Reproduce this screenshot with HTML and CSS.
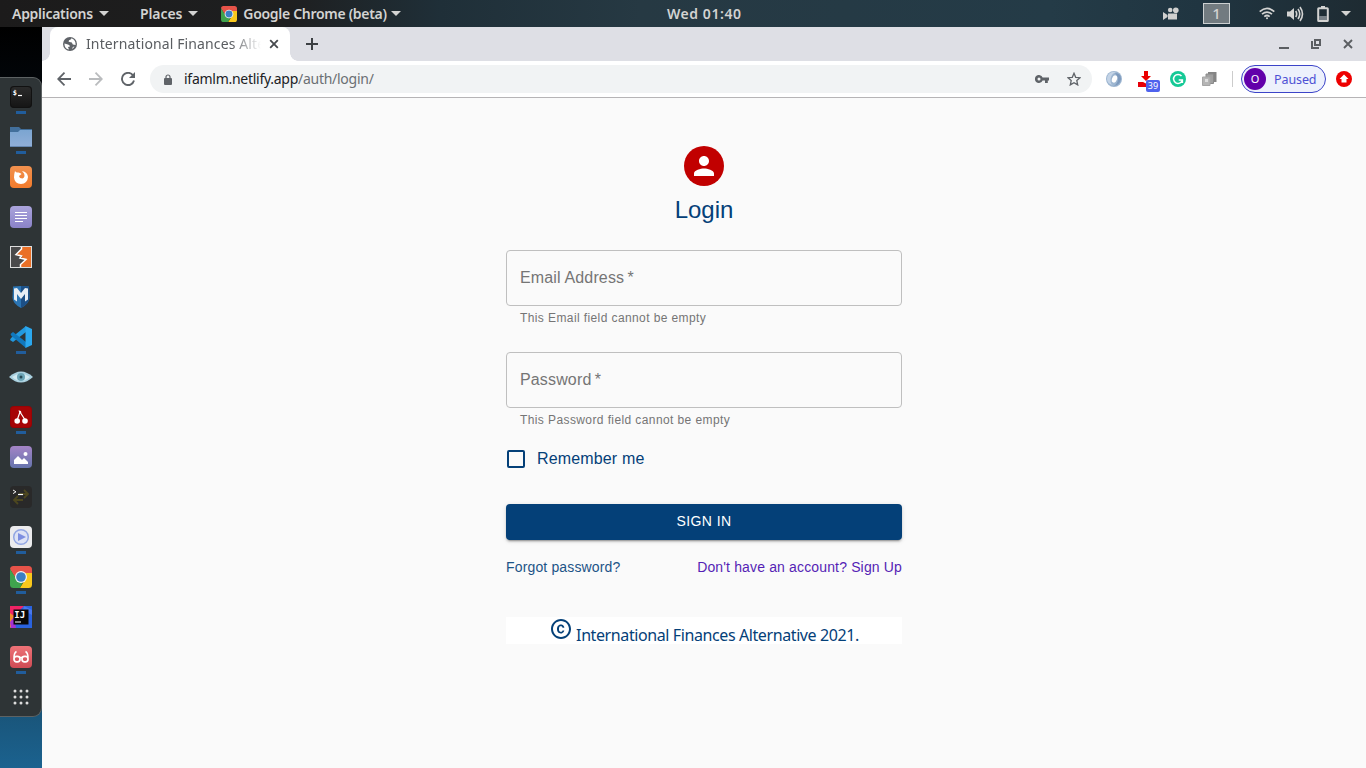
FILE: index.html
```html
<!DOCTYPE html>
<html lang="en">
<head>
<meta charset="utf-8">
<title>International Finances Alternative</title>
<link rel="stylesheet" href="styles.css">
</head>
<body>
<header class="panel">
  <div class="menu menu-apps"><span class="t-apps">Applications</span><i class="caret"></i></div>
  <div class="menu menu-places"><span class="t-places">Places</span><i class="caret"></i></div>
  <div class="menu menu-chrome">
    <svg width="16" height="16" viewBox="0 0 22 22"><use href="#chrome"/></svg>
    <span class="t-chrome">Google Chrome (beta)</span><i class="caret"></i>
  </div>
  <div class="clock"><span>Wed 01:40</span></div>
  <div class="tray">
    <svg class="tray-cam" width="16" height="14" viewBox="0 0 16 14" fill="#d0d0cf"><circle cx="7.200" cy="3" r="2.300"/><circle cx="12.800" cy="3.200" r="2.800"/><path d="M5 6.500h9v6H5zM0 5l4.500 3v2L0 13z"/></svg>
    <span class="workspace">1</span>
    <svg class="tray-wifi" width="16" height="13" viewBox="0 0 16 13" fill="none" stroke="#d3d3d2" stroke-width="1.700"><path d="M.7 4.700q7.300-6.500 14.600 0M3 7.200q5-4.200 10 0M5.300 9.600q2.700-2.200 5.400 0"/><circle cx="8" cy="11.200" r="1" fill="#d3d3d2" stroke="none"/></svg>
    <svg class="tray-vol" width="17" height="16" viewBox="0 0 17 16"><path d="M0 5.500h3l4-3.500v12l-4-3.500H0z" fill="#d3d3d2"/><path d="M8.700 5q2 3 0 6M11 3q3.500 5 0 10M13 1q5 7 0 14" fill="none" stroke="#d3d3d2" stroke-width="1.600"/></svg>
    <svg class="tray-bat" width="12" height="16" viewBox="0 0 12 16"><path d="M4 0h4v2H4z" fill="#d3d3d2"/><rect x="1.200" y="2.200" width="9.600" height="12.800" rx=".6" fill="none" stroke="#d3d3d2" stroke-width="2"/><path d="M2 10h8v4H2z" fill="#778087"/></svg>
    <i class="caret"></i>
  </div>
</header>

<div class="desktop">
  <aside class="side">
    <nav class="dock">
      <div class="app on"><svg viewBox="0 0 22 22"><rect width="22" height="22" rx="4" fill="#191919"/><rect x=".5" y=".5" width="21" height="21" rx="3.500" fill="url(#gDark)" stroke="#111"/><text x="2.800" y="9" class="mono">$</text><path d="M8 9.500h4" stroke="#fff" stroke-width="1.200"/></svg></div>
      <div class="app on"><svg viewBox="0 0 22 22"><path d="M0 1h9l2 2h11v7H0z" fill="#426f9b"/><path d="M0 6h8l2-2h12v17H0z" fill="url(#gFolder)"/><path d="M0 20h22v1H0z" fill="#6687b0"/></svg></div>
      <div class="app"><svg viewBox="0 0 22 22"><rect width="22" height="22" rx="4" fill="url(#gOrange)"/><path d="M5 5q1 2 3.500 1.500Q11 7 11.500 8L9 10q.5 2.500 3.500 2.500Q15.500 11 14 7.500L12 5q5.500 1 6 6-.5 6.500-7 7-6.500-.5-7-6.500Q4 8 5 5z" fill="#fff"/></svg></div>
      <div class="app"><svg viewBox="0 0 22 22"><rect width="22" height="22" rx="4" fill="url(#gPurple)"/><path d="M5 6.500h12M5 9.500h12M5 12.500h12M5 15.500h8" stroke="#fff" stroke-width="1"/></svg></div>
      <div class="app"><svg viewBox="0 0 22 22"><rect width="22" height="22" fill="#4a4a4b"/><path d="M11.500 0H22v22H10.500v-3.500l6-5-5-1.500 1-2-6-1.500L11.500 3z" fill="#ea7027"/><path d="M11.500 0v3L6 8.500l5.500 1.500-1.500 2 6 1.500-5.500 5V22" fill="none" stroke="#fff" stroke-width="1.500"/><rect x=".5" y=".5" width="21" height="21" fill="none" stroke="#ddd"/></svg></div>
      <div class="app"><svg viewBox="0 0 22 22"><path d="M3 .5q8-1 16 0l.5 11q0 6-8.500 10.500Q2.500 17.500 2.500 11.500z" fill="#2b75b4"/><path d="M11 0q4 0 8 .5l.5 11q0 6-8.500 10.500z" fill="#1c4f86"/><path d="M4 2.500l3-.5 4 5 4-5 3 .5v11l-3 2V8l-4 5-4-5v7.500l-3-2z" fill="#e7eef5"/></svg></div>
      <div class="app on"><svg viewBox="0 0 22 22"><path d="M16 0v6L3 16l-3-2 1-2z" fill="#2299df"/><path d="M16 22v-6L3 6 .5 8l1 2z" fill="#1178bd"/><path d="M15.500 0L22 3v16l-6.500 3z" fill="#2ba8ef"/></svg></div>
      <div class="app"><svg class="wide" viewBox="0 0 24 22"><path d="M0 11Q12 0 24 11 12 22 0 11z" fill="#a9d0df"/><path d="M3 11Q12 4 21 11 12 19 3 11z" fill="#d2eaf1"/><circle cx="12" cy="11" r="4" fill="#6ba5b7"/><circle cx="12" cy="11" r="1.500" fill="#294c58"/></svg></div>
      <div class="app on"><svg viewBox="0 0 22 22"><rect width="22" height="22" rx="4" fill="#980305"/><rect x="1" y="1" width="20" height="20" rx="3" fill="#a60406"/><path d="M7.500 13L10 6l4.500 7" fill="none" stroke="#fff" stroke-width="1.200"/><path d="M8.500 4.500q2.500-.5 3 2l-2 .5z" fill="#fff"/><circle cx="7.200" cy="15" r="2.800" fill="#fff"/><circle cx="15" cy="15" r="2.800" fill="#fff"/></svg></div>
      <div class="app"><svg viewBox="0 0 22 22"><rect width="22" height="22" rx="4" fill="url(#gPhoto)"/><circle cx="15.500" cy="8" r="2" fill="#fff"/><path d="M4 18v-4l4-4 4 4 2-2 4 4v2z" fill="#fff"/></svg></div>
      <div class="app"><svg viewBox="0 0 22 22"><rect width="22" height="22" rx="4" fill="#292929"/><path d="M9 8h8M14 4l4 4-4 4M13 14H5M8 10l-4 4 4 4" fill="none" stroke="#4d471f" stroke-width="1.800"/><path d="M3 4l3 1.800L3 7.600" fill="none" stroke="#eee"/><path d="M8 8.500h5" stroke="#fff" stroke-width="1.200"/></svg></div>
      <div class="app on"><svg viewBox="0 0 22 22"><rect width="22" height="22" rx="4" fill="#ebebed"/><circle cx="11" cy="11" r="7.300" fill="#dde2f5" stroke="#92a6e3" stroke-width="1.500"/><path d="M8 7l8 4-8 4z" fill="#7d8ee0"/></svg></div>
      <div class="app on"><svg viewBox="0 0 22 22"><use href="#chrome"/></svg></div>
      <div class="app"><svg viewBox="0 0 22 22"><path d="M0 0h22v22H0z" fill="#2a63df"/><path d="M0 0h14L4 10 0 12z" fill="#ef2465"/><path d="M0 7l4 3v8l-4 4z" fill="#f3892c"/><path d="M0 16l4-5 2 11H1z" fill="#a431d3"/><path d="M14 0l8 4v5l-9-5z" fill="#4878ee"/><path d="M3.500 3.500h15v15h-15z" fill="#080808"/><text x="4.300" y="11.500" class="ij">IJ</text><path d="M5 15.500h6v1H5z" fill="#fff"/></svg></div>
      <div class="app on"><svg viewBox="0 0 22 22"><rect width="22" height="22" rx="4" fill="url(#gRed)"/><path d="M4 11.500Q4 7 6.500 5.500M18 11.500Q18 7 15.500 5.500" fill="none" stroke="#fff" stroke-width="1.500"/><rect x="4" y="10.300" width="6" height="5.500" rx="2.500" fill="none" stroke="#fff" stroke-width="1.700"/><rect x="12" y="10.300" width="6" height="5.500" rx="2.500" fill="none" stroke="#fff" stroke-width="1.700"/><path d="M9.500 11.500h3" stroke="#fff" stroke-width="1.500"/></svg></div>
      <div class="app"><svg viewBox="0 0 22 22" fill="#ddd"><circle cx="5" cy="5" r="1.500"/><circle cx="11" cy="5" r="1.500"/><circle cx="17" cy="5" r="1.500"/><circle cx="5" cy="11" r="1.500"/><circle cx="11" cy="11" r="1.500"/><circle cx="17" cy="11" r="1.500"/><circle cx="5" cy="17" r="1.500"/><circle cx="11" cy="17" r="1.500"/><circle cx="17" cy="17" r="1.500"/></svg></div>
    </nav>
  </aside>

  <main class="browser">
    <div class="tabs">
      <div class="tab">
        <svg class="globe" width="14" height="14" viewBox="0 0 14 14"><circle cx="7" cy="7" r="7" fill="#5f6368"/><path d="M1.400 6.500l3.600 1q1.800.3 2 2l-2 .6 1 2.500q-4.500-.5-4.600-6.100zM8.500 1.300q-.3 1.700-2.500 2l-.4 1.500 3.200.7 1 2 2.800.4q.2-4.900-4.100-6.600zM9.500 10.500l2-1.500q-.7 2-2.300 3z" fill="#fff"/></svg>
        <span class="tab-title">International Finances Alternative</span>
        <svg class="tab-close" width="10" height="10" viewBox="0 0 10 10"><path d="M1.200 1.200l7.600 7.600M8.800 1.200L1.200 8.800" stroke="#46494d" stroke-width="1.800"/></svg>
      </div>
      <svg class="new-tab" width="12" height="12" viewBox="0 0 12 12"><path d="M6 0v12M0 6h12" stroke="#3c4043" stroke-width="2"/></svg>
      <div class="controls">
        <svg width="10" height="10" viewBox="0 0 10 10"><path d="M0 9h10" stroke="#5b5e62" stroke-width="2"/></svg>
        <svg width="10" height="10" viewBox="0 0 10 10" fill="none" stroke="#5b5e62" stroke-width="2"><path d="M4 1h5v5H4z"/><path d="M1 2v7h7"/></svg>
        <svg width="10" height="10" viewBox="0 0 10 10"><path d="M1 1l8 8M9 1L1 9" stroke="#5b5e62" stroke-width="1.900"/></svg>
      </div>
    </div>
    <div class="toolbar">
      <svg class="back" width="14" height="14" viewBox="0 0 14 14" fill="none" stroke="#5f6368" stroke-width="1.800"><path d="M14 7H1M7.500.7L1.200 7l6.300 6.300"/></svg>
      <svg class="fwd" width="14" height="14" viewBox="0 0 14 14" fill="none" stroke="#babcbe" stroke-width="1.800"><path d="M0 7h13M6.500.7L12.800 7l-6.300 6.300"/></svg>
      <svg class="reload" width="14" height="14" viewBox="0 0 14 14"><path d="M12 3.300A6.100 6.100 0 1 0 13 8.500" fill="none" stroke="#5f6368" stroke-width="1.900"/><path d="M14 0v6H8z" fill="#5f6368"/></svg>
      <div class="omnibox">
        <svg width="8" height="11" viewBox="0 0 8 11"><path d="M2 5V3a2 2 0 0 1 4 0v2" fill="none" stroke="#5f6368" stroke-width="1.200"/><rect y="4" width="8" height="7" rx="1" fill="#5f6368"/></svg>
        <span class="url"><b>ifamlm.netlify.app</b>/auth/login/</span>
        <svg class="key" width="14" height="8" viewBox="0 0 14 8"><path fill-rule="evenodd" d="M7.600 2.500H14v3h-1.200V8H10V5.500H7.600a4 4 0 1 1 0-3zM4 2.500a1.500 1.500 0 1 0 0 3 1.500 1.500 0 0 0 0-3z" fill="#5f6368"/></svg>
        <svg class="star" width="14" height="14" viewBox="0 0 14 14"><path d="M7 1.300l1.700 4 4.300.4-3.200 2.900.9 4.300L7 10.700l-3.700 2.200.9-4.300L1 5.700l4.300-.4z" fill="none" stroke="#5f6368" stroke-width="1.300"/></svg>
      </div>
      <div class="extensions">
        <svg width="16" height="16" viewBox="0 0 16 16"><circle cx="8" cy="8" r="8" fill="#9db6d1"/><path d="M2 4Q5 0 10 1 5 3 4.500 8T7 14Q1 13 1 8q0-2 1-4z" fill="#c3d3e6"/><path d="M9 2q6 0 6 6-1 6-7 7 4-3 4-7-1-4-3-6z" fill="#7d99bd"/><ellipse cx="8.500" cy="8" rx="2.500" ry="3.800" transform="rotate(20 8.500 8)" fill="#fff"/></svg>
        <div class="download">
          <svg width="16" height="16" viewBox="0 0 16 16"><path d="M6 0h4v5h3L8 10 3 5h3z" fill="#eb0000"/><path d="M0 11h5l3 1.500 3-1.500h4v5H0z" fill="#e6000a"/></svg>
          <span class="count">39</span>
        </div>
        <svg width="16" height="16" viewBox="0 0 16 16"><circle cx="8" cy="8" r="8" fill="#15c996"/><path d="M11.500 5A4.500 4.500 0 1 0 12.300 9.500M8.700 9h3.700V12" fill="none" stroke="#fff" stroke-width="1.500"/></svg>
        <svg class="pages" width="15" height="14" viewBox="0 0 15 14"><path d="M6 0h8.500v10H6z" fill="#858585"/><path d="M4 2h7.500v9.500H4z" fill="#a0a0a0" stroke="#8a8a8a"/><path d="M.5 5h7.500v8.500H.5z" fill="#b5b5b5" stroke="#a5a5a5"/><path d="M3 7h3v3H3z" fill="#ddd"/></svg>
      </div>
      <div class="profile"><span class="initial">O</span><span class="paused">Paused</span></div>
      <svg width="16" height="16" viewBox="0 0 16 16"><circle cx="8" cy="8" r="8" fill="#ee0000"/><path d="M8 3.500L12.500 8H10.500v3.500h-5V8h-2z" fill="#fff"/></svg>
    </div>
    <section class="page">
      <form class="login">
        <div class="avatar"><svg width="30" height="30" viewBox="0 0 24 24" fill="#fff"><path d="M12 12c2.210 0 4-1.790 4-4s-1.790-4-4-4-4 1.790-4 4 1.790 4 4 4zm0 2c-2.670 0-8 1.340-8 4v2h16v-2c0-2.660-5.330-4-8-4z"/></svg></div>
        <h1>Login</h1>
        <div class="field">Email Address<span class="star-mark">&#8201;*</span></div>
        <p class="helper">This Email field cannot be empty</p>
        <div class="field">Password<span class="star-mark">&#8201;*</span></div>
        <p class="helper">This Password field cannot be empty</p>
        <label class="remember"><i class="box"></i>Remember me</label>
        <button type="button" class="submit">SIGN IN</button>
        <div class="links"><a class="forgot">Forgot password?</a><a class="signup">Don't have an account? Sign Up</a></div>
        <footer class="copyright">
          <svg width="24" height="24" viewBox="0 0 24 24" fill="#044078"><path d="M10.080 10.860c.05-.33.16-.62.3-.87s.34-.46.590-.62c.24-.15.540-.22.910-.23.230.01.440.05.630.130.200.090.380.210.520.360s.250.330.340.530.130.420.140.640h1.790c-.02-.47-.11-.9-.28-1.290s-.4-.73-.7-1.010-.66-.5-1.080-.66-.88-.23-1.390-.23c-.65 0-1.220.110-1.700.340s-.88.530-1.200.920-.56.840-.71 1.360S8 11.290 8 11.870v.270c0 .58.080 1.120.230 1.640s.390.970.710 1.350.720.690 1.200.910c.480.220 1.050.340 1.700.340.470 0 .910-.08 1.320-.23s.770-.36 1.080-.63.560-.58.740-.94.290-.74.300-1.150h-1.790c-.01.210-.06.400-.15.580s-.21.330-.36.460-.32.230-.52.300c-.19.070-.39.090-.60.100-.36-.01-.66-.08-.89-.23-.25-.16-.45-.37-.59-.62s-.25-.55-.30-.88-.08-.67-.08-1v-.27c0-.35.030-.68.080-1.010zM12 2C6.480 2 2 6.480 2 12s4.480 10 10 10 10-4.480 10-10S17.520 2 12 2zm0 18c-4.410 0-8-3.590-8-8s3.590-8 8-8 8 3.590 8 8-3.590 8-8 8z"/></svg>
          <span>International Finances Alternative 2021.</span>
        </footer>
      </form>
    </section>
  </main>
</div>

<svg class="defs" width="0" height="0" viewBox="0 0 22 22">
  <defs>
    <linearGradient id="gDark" x2="0" y2="1"><stop stop-color="#2b2b2b"/><stop offset="1" stop-color="#151515"/></linearGradient>
    <linearGradient id="gFolder" x2="0" y2="1"><stop stop-color="#7ba5d1"/><stop offset="1" stop-color="#91afd8"/></linearGradient>
    <linearGradient id="gOrange" x2="0" y2="1"><stop stop-color="#f1914f"/><stop offset="1" stop-color="#f27b2c"/></linearGradient>
    <linearGradient id="gPurple" x2="0" y2="1"><stop stop-color="#aaa4dc"/><stop offset="1" stop-color="#8a82c8"/></linearGradient>
    <linearGradient id="gPhoto" x2="0" y2="1"><stop stop-color="#a484c6"/><stop offset="1" stop-color="#6674ad"/></linearGradient>
    <linearGradient id="gRed" x2="0" y2="1"><stop stop-color="#ee7378"/><stop offset="1" stop-color="#cf4b54"/></linearGradient>
    <clipPath id="tile"><rect width="22" height="22" rx="3.500"/></clipPath>
    <g id="chrome" clip-path="url(#tile)"><path d="M0 0h22v8H11L6 13 0 3z" fill="#e65349"/><path d="M0 3l7 11 6 2-3 6H0z" fill="#3fa34d"/><path d="M11 7h11v15H10l6-10z" fill="#fac81c"/><circle cx="11" cy="11" r="6" fill="#f4f4f4"/><circle cx="11" cy="11" r="4.800" fill="#3b7fc4"/></g>
  </defs>
</svg>
</body>
</html>
```
FILE: styles.css
```css
* { box-sizing: border-box; }
body {
  margin: 0;
  width: 1366px;
  height: 768px;
  overflow: hidden;
  display: flex;
  flex-direction: column;
  font-family: "Noto Sans", "Open Sans", sans-serif;
}
svg { display: block; flex: none; }
.defs { position: absolute; }

.panel {
  height: 27px;
  flex: none;
  display: flex;
  align-items: center;
  background: linear-gradient(90deg, #1c1b1b 0, #1e1f20 290px, #1f2f38 440px, #263943 640px, #243b47 1050px, #203541 1200px, #1e2b32 1366px);
  color: #d3d3d2;
  font-size: 14px;
  font-weight: 600;
  line-height: 26px;
  white-space: nowrap;
}
.menu { display: flex; align-items: center; justify-content: space-between; }
.menu-apps { width: 97px; margin-left: 12px; }
.menu-places { width: 58px; margin-left: 31px; }
.menu-chrome { width: 180px; margin-left: 23px; }
.t-apps { letter-spacing: -.28px; }
.t-places { letter-spacing: -.1px; }
.t-chrome { letter-spacing: -.3px; margin-left: 2px; }
.caret { border: 5px solid transparent; border-top-color: #d3d3d2; border-bottom: 0; }
.clock { width: 76px; margin-left: 266px; letter-spacing: .55px; }
.tray { display: flex; align-items: center; margin-left: 420px; }
.workspace {
  width: 27px;
  height: 21px;
  margin-left: 24px;
  border: 1px solid #ccd0d1;
  background: #727b80;
  line-height: 19px;
  text-align: center;
  font-weight: 500;
  font-size: 15px;
}
.tray-wifi { margin-left: 29px; }
.tray-vol { margin-left: 12px; }
.tray-bat { margin: 0 12px 0 13px; }

.desktop { flex: 1; display: flex; min-height: 0; }
.side {
  width: 42px;
  flex: none;
  padding-top: 50px;
  background: linear-gradient(#000 0, #02060a 60px, #184a68 640px, #1b628f 741px);
}
.dock {
  height: 640px;
  border: 1px solid #5d6263;
  border-left: 0;
  border-radius: 0 9px 9px 0;
  background: #2e3436;
}
.app {
  height: 40px;
  padding: 8px 0 0 10px;
}
.app svg { width: 22px; height: 22px; }
.app .wide { width: 24px; margin-left: -1px; }
.app.on::after {
  content: "";
  display: block;
  width: 10px;
  height: 3px;
  margin: 3px 0 0 6px;
  background: #215d9c;
}
.mono { font: bold 7px "DejaVu Sans Mono", monospace; fill: #fff; }
.ij { font: bold 9px "DejaVu Sans Mono", monospace; fill: #fff; }

.browser { flex: 1; display: flex; flex-direction: column; background: #fafafa; }
.tabs {
  height: 34px;
  flex: none;
  display: flex;
  align-items: center;
  background: #dedfe5;
}
.tab {
  width: 240px;
  height: 34px;
  margin-left: 8px;
  padding: 0 11px 0 13px;
  display: flex;
  align-items: center;
  position: relative;
  background: #fff;
  border-radius: 8px 8px 0 0;
}
.tab::before,
.tab::after {
  content: "";
  position: absolute;
  bottom: 0;
  width: 8px;
  height: 8px;
}
.tab::before { left: -8px; background: radial-gradient(circle at 0 0, transparent 7.500px, #fff 8px); }
.tab::after { right: -8px; background: radial-gradient(circle at 100% 0, transparent 7.500px, #fff 8px); }
.tab-title {
  width: 175px;
  margin: 0 8px 0 9px;
  overflow: hidden;
  white-space: nowrap;
  font-size: 14px;
  line-height: 22px;
  padding-bottom: 1px;
  letter-spacing: .12px;
  color: #5a5d61;
  -webkit-mask-image: linear-gradient(90deg, #000 145px, transparent 175px);
  mask-image: linear-gradient(90deg, #000 145px, transparent 175px);
}
.new-tab { margin-left: 16px; }
.controls { display: flex; gap: 22px; margin: 0 13px 0 auto; }
.toolbar {
  height: 37px;
  flex: none;
  display: flex;
  align-items: center;
  padding-left: 15px;
  background: #fff;
  border-bottom: 1px solid #b6b4b6;
}
.fwd { margin-left: 18px; }
.reload { margin-left: 18px; }
.omnibox {
  width: 942px;
  height: 28px;
  margin-left: 15px;
  padding: 0 11px 0 14px;
  display: flex;
  align-items: center;
  border-radius: 14px;
  background: #f1f3f4;
}
.url { margin: -1px 0 0 12px; font-size: 14px; letter-spacing: -.27px; color: #6b6f73; }
.url b { font-weight: 400; color: #202124; }
.key { margin: 0 18px 0 auto; }
.extensions { display: flex; align-items: center; gap: 16px; margin-left: 14px; }
.download { position: relative; }
.count {
  position: absolute;
  left: 8px;
  top: 9px;
  width: 14px;
  height: 12px;
  border-radius: 2px;
  background: #4e62ee;
  color: #fff;
  font-size: 9px;
  line-height: 12px;
  text-align: center;
}
.profile {
  width: 85px;
  height: 28px;
  margin: 0 10px 0 24px;
  padding-left: 2px;
  display: flex;
  align-items: center;
  position: relative;
  border: 1px solid #3c44c8;
  border-radius: 14px;
  background: #edf1fc;
}
.profile::before {
  content: "";
  position: absolute;
  left: -10px;
  width: 1px;
  height: 16px;
  background: #ccc;
}
.initial {
  width: 22px;
  height: 22px;
  border-radius: 50%;
  background: #6200aa;
  color: #fff;
  font-size: 11px;
  line-height: 22px;
  text-align: center;
}
.paused { margin-left: 8px; font-size: 12.5px; letter-spacing: -.1px; color: #4c50d4; }

.page { flex: 1; font-family: "Liberation Sans", Arial, sans-serif; color: #044078; }
.login { width: 396px; margin: 48px 0 0 464px; }
.avatar {
  width: 40px;
  height: 40px;
  margin: 0 auto;
  display: flex;
  align-items: center;
  justify-content: center;
  border-radius: 50%;
  background: #c10000;
}
h1 { margin: 8px 0 24px; font-size: 24px; line-height: 32px; font-weight: 400; text-align: center; }
.field {
  height: 56px;
  padding: 0 13px;
  border: 1px solid #bfbfbf;
  border-radius: 4px;
  color: #757575;
  font-size: 16px;
  line-height: 54px;
  letter-spacing: .15px;
}
.helper { margin: 3px 14px 24px; height: 19px; font-size: 12px; line-height: 19px; letter-spacing: .4px; color: #757575; }
.remember {
  height: 42px;
  margin-top: -16px;
  display: flex;
  align-items: center;
  font-size: 16px;
  letter-spacing: .15px;
}
.box { width: 18px; height: 18px; margin: 0 12px 0 1px; border: 2px solid #044078; border-radius: 2px; }
.submit {
  display: block;
  width: 396px;
  height: 36px;
  margin: 24px 0 16px;
  padding: 0 0 2px;
  border: 0;
  border-radius: 4px;
  background: #044078;
  color: #fff;
  font: 14px/34px "Liberation Sans", Arial, sans-serif;
  letter-spacing: .4px;
  box-shadow: 0 3px 1px -2px rgba(0,0,0,.2), 0 2px 2px rgba(0,0,0,.14), 0 1px 5px rgba(0,0,0,.12);
}
.links { display: flex; justify-content: space-between; font-size: 14px; line-height: 22px; letter-spacing: .15px; }
.forgot { color: #1d5487; }
.signup { color: #551fb5; }
.copyright {
  height: 27px;
  margin-top: 39px;
  display: flex;
  justify-content: center;
  background: #fff;
  font: 16px/36px "Noto Sans", "Open Sans", sans-serif;
}
.copyright span { margin-left: 3px; letter-spacing: -.4px; white-space: nowrap; }
```
